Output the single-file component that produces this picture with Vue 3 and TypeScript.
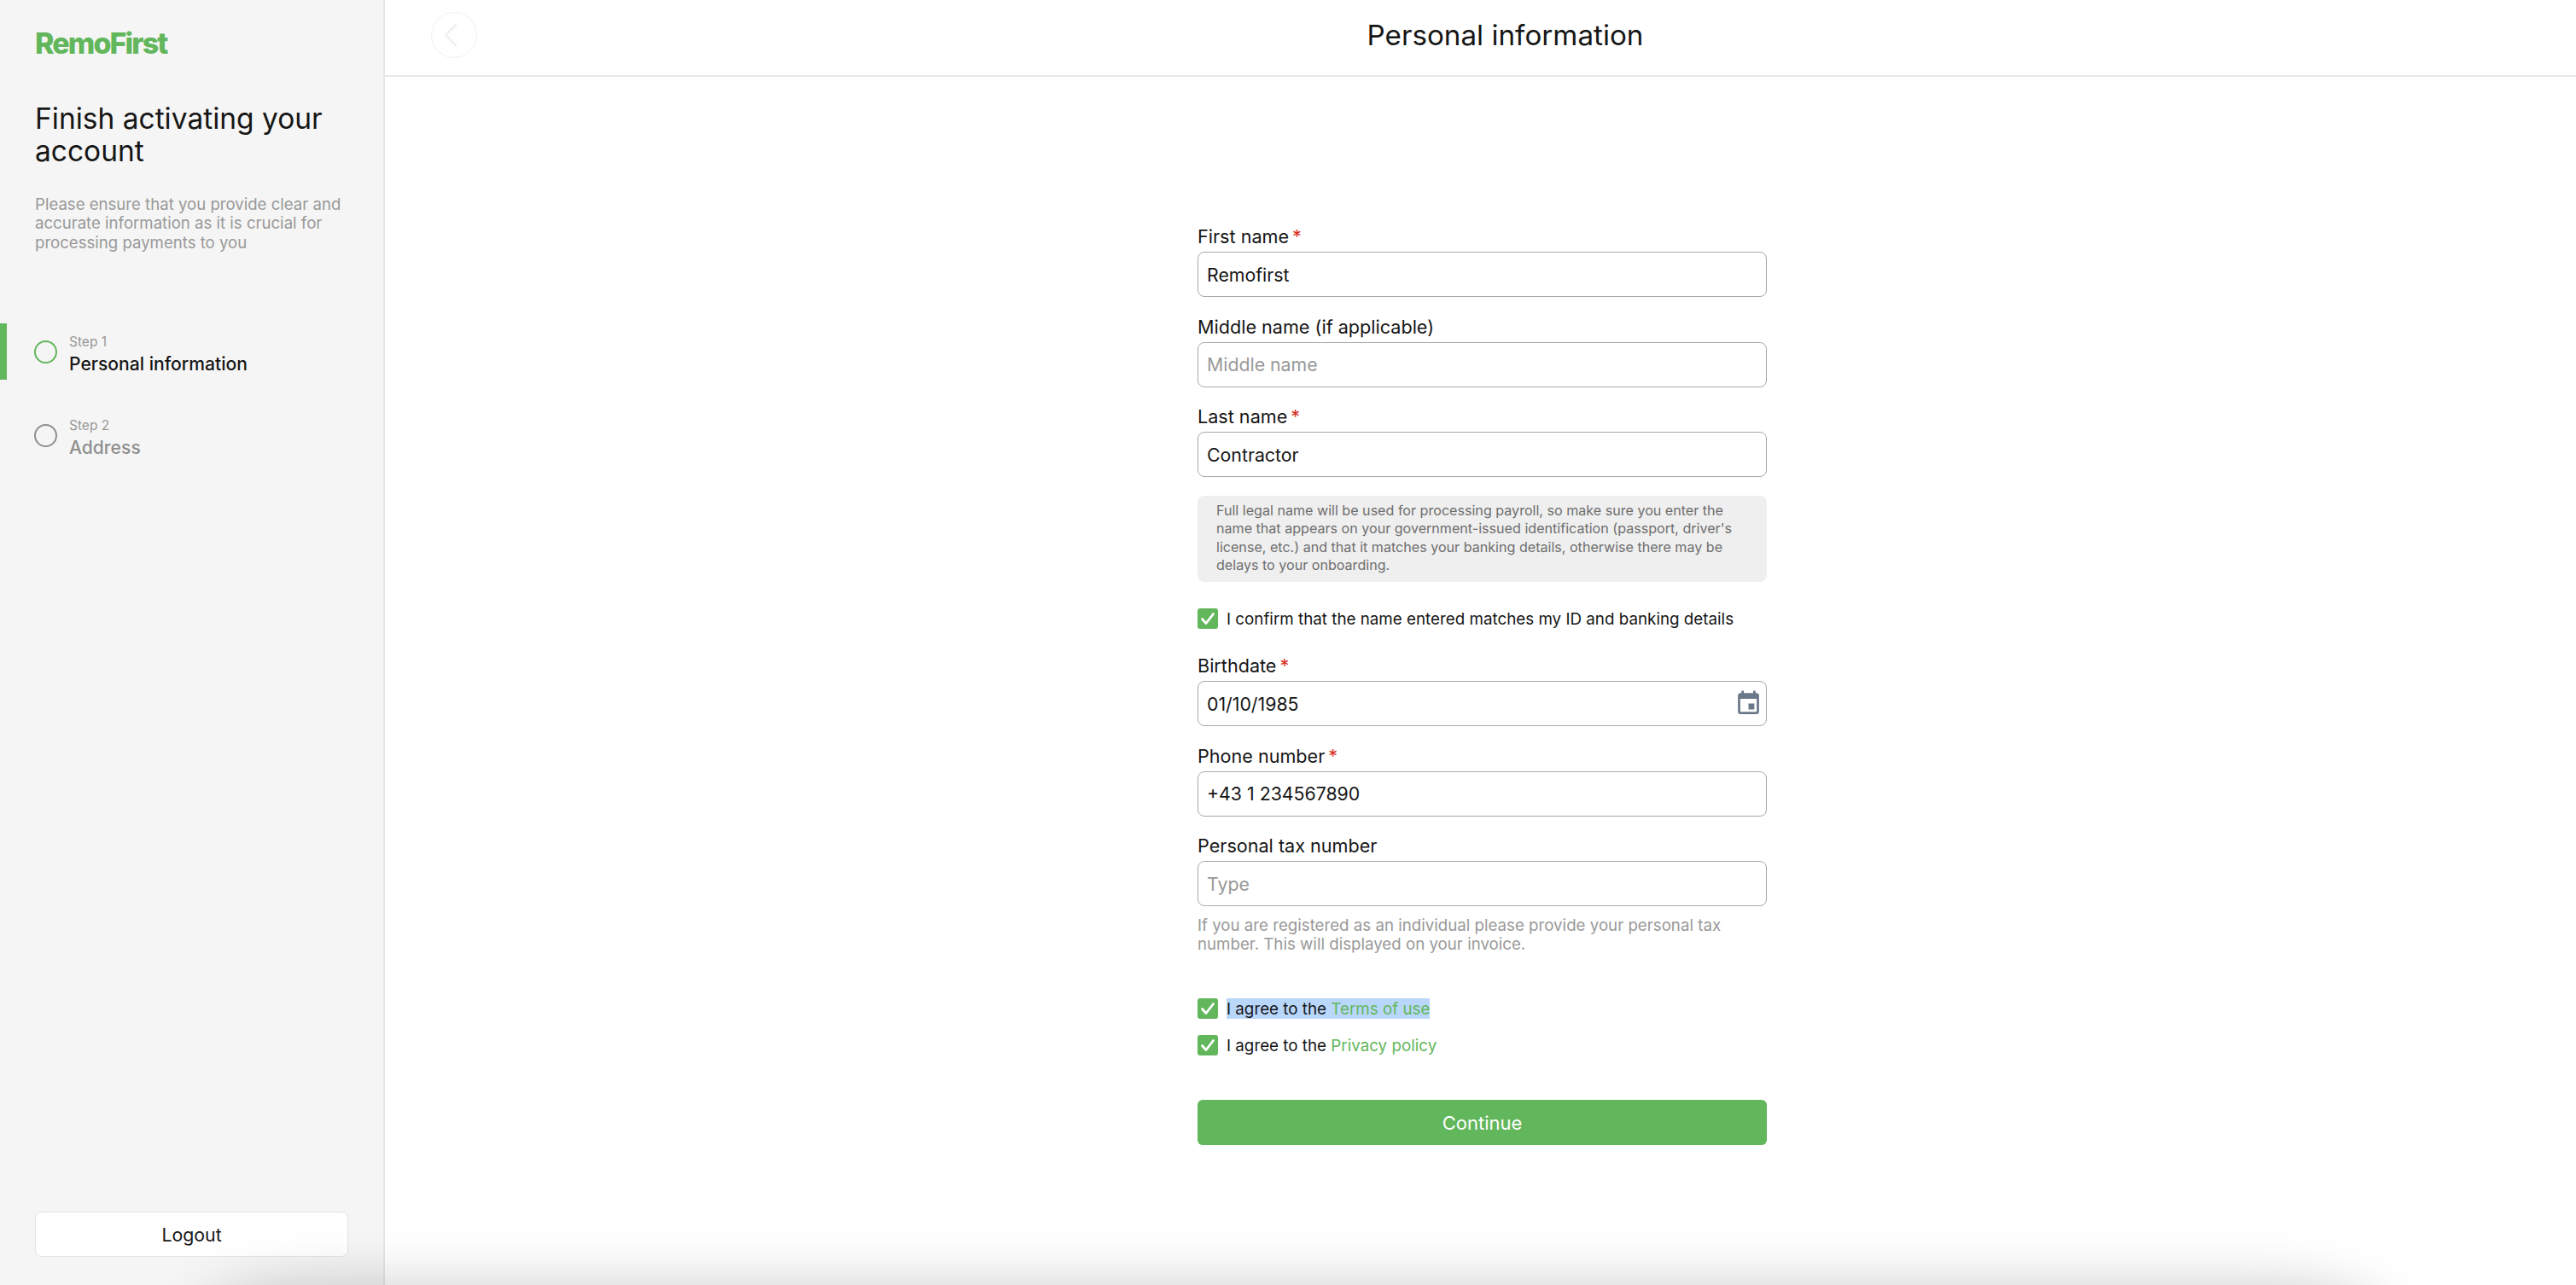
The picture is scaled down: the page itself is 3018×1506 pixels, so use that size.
<script setup lang="ts">
interface Step { small: string; title: string; active: boolean }
const steps: Step[] = [
  { small: 'Step 1', title: 'Personal information', active: true },
  { small: 'Step 2', title: 'Address', active: false },
]
</script>

<template>
  <div class="app">
    <aside class="sidebar">
      <div class="logo">RemoFirst</div>
      <h1 class="headline">Finish activating your account</h1>
      <p class="desc">Please ensure that you provide clear and accurate information as it is crucial for processing payments to you</p>
      <ul class="steps">
        <li v-for="s in steps" :key="s.small" class="step" :class="{ active: s.active }">
          <span class="dot"></span>
          <div class="step-text">
            <div class="step-small">{{ s.small }}</div>
            <div class="step-title">{{ s.title }}</div>
          </div>
        </li>
      </ul>
      <button class="logout" type="button">Logout</button>
    </aside>

    <main class="main">
      <header class="topbar">
        <button class="back" type="button" aria-label="Back">
          <svg width="20" height="30" viewBox="0 0 20 30" fill="none">
            <path d="M15 3 L3 15 L15 27" stroke="#f0f0f0" stroke-width="2.6" stroke-linecap="round" stroke-linejoin="round" />
          </svg>
        </button>
        <div class="title">Personal information</div>
      </header>

      <form class="form" @submit.prevent>
        <div class="names">
          <div class="field">
            <label class="label">First name<span class="req">*</span></label>
            <input class="input" value="Remofirst" />
          </div>
          <div class="field">
            <label class="label">Middle name (if applicable)</label>
            <input class="input" placeholder="Middle name" />
          </div>
          <div class="field">
            <label class="label">Last name<span class="req">*</span></label>
            <input class="input" value="Contractor" />
          </div>
        </div>

        <div class="info">Full legal name will be used for processing payroll, so make sure you enter the name that appears on your government-issued identification (passport, driver's license, etc.) and that it matches your banking details, otherwise there may be delays to your onboarding.</div>

        <div class="check confirm">
          <span class="box">
            <svg width="24" height="24" viewBox="0 0 24 24" fill="none"><path d="M5.5 12.5 L10 17.5 L18.5 6.5" stroke="#fff" stroke-width="2.8" stroke-linecap="round" stroke-linejoin="round" /></svg>
          </span>
          <span class="check-text">I confirm that the name entered matches my ID and banking details</span>
        </div>

        <div class="contact">
          <div class="field">
            <label class="label">Birthdate<span class="req">*</span></label>
            <div class="input-wrap">
              <input class="input" value="01/10/1985" />
              <svg class="cal" width="33" height="33" viewBox="0 0 24 24" fill="#6b7889">
                <path d="M17 12h-5v5h5v-5zM16 1v2H8V1H6v2H5c-1.11 0-1.99.9-1.99 2L3 19c0 1.1.89 2 2 2h14c1.1 0 2-.9 2-2V5c0-1.1-.9-2-2-2h-1V1h-2zm3 18H5V8h14v11z" />
              </svg>
            </div>
          </div>
          <div class="field">
            <label class="label">Phone number<span class="req">*</span></label>
            <input class="input" value="+43 1 234567890" />
          </div>
          <div class="field">
            <label class="label">Personal tax number</label>
            <input class="input" placeholder="Type" />
            <p class="hint">If you are registered as an individual please provide your personal tax number. This will displayed on your invoice.</p>
          </div>
        </div>

        <div class="agreements">
          <div class="check">
            <span class="box">
              <svg width="24" height="24" viewBox="0 0 24 24" fill="none"><path d="M5.5 12.5 L10 17.5 L18.5 6.5" stroke="#fff" stroke-width="2.8" stroke-linecap="round" stroke-linejoin="round" /></svg>
            </span>
            <span class="check-text selected">I agree to the <a class="link">Terms of use</a></span>
          </div>
          <div class="check">
            <span class="box">
              <svg width="24" height="24" viewBox="0 0 24 24" fill="none"><path d="M5.5 12.5 L10 17.5 L18.5 6.5" stroke="#fff" stroke-width="2.8" stroke-linecap="round" stroke-linejoin="round" /></svg>
            </span>
            <span class="check-text">I agree to the <a class="link">Privacy policy</a></span>
          </div>
        </div>

        <button class="continue" type="submit">Continue</button>
      </form>
    </main>

    <div class="bottom-shadow"></div>
  </div>
</template>

<style>
html, body { margin: 0; padding: 0; background: #fff; overflow: hidden; }
</style>

<style scoped>
* { box-sizing: border-box; }
.app {
  position: relative;
  display: flex;
  width: 100%;
  height: 100vh;
  overflow: hidden;
  font-family: Inter, "Liberation Sans", sans-serif;
  color: #161616;
}
.sidebar {
  width: 451px;
  flex: none;
  display: flex;
  flex-direction: column;
  background: #f5f5f5;
  border-right: 2px solid #e6e6e6;
  padding-top: 33px;
}
.logo {
  margin-left: 41px;
  height: 36px;
  line-height: 36px;
  font-size: 34px;
  font-weight: 800;
  letter-spacing: -1.9px;
  color: #62b65b;
}
.headline {
  margin: 52px 30px 0 41px;
  font-size: 33.5px;
  line-height: 37.5px;
  font-weight: 400;
  color: #161616;
}
.desc {
  margin: 31.5px 30px 0 41px;
  font-size: 18.6px;
  line-height: 22.5px;
  color: #999;
}
.steps {
  list-style: none;
  margin: 84px 0 0;
  padding: 0;
  display: flex;
  flex-direction: column;
  gap: 32.5px;
}
.step {
  height: 66px;
  display: flex;
  align-items: center;
  gap: 14px;
  padding-left: 32px;
  border-left: 8px solid transparent;
  color: #8f8f8f;
}
.step.active { border-left-color: #62b65b; color: #161616; }
.dot {
  width: 27px;
  height: 27px;
  flex: none;
  border-radius: 50%;
  border: 2px solid #8f8f8f;
}
.step.active .dot { border-color: #62b65b; }
.step-text { padding-top: 8px; }
.step-small { font-size: 15.5px; line-height: 20px; color: #999; }
.step-title { font-size: 21.1px; line-height: 31px; font-weight: 500; }
.logout {
  margin: auto 0 33px 41px;
  width: 367px;
  height: 53px;
  background: #fff;
  border: 1.5px solid #e4e4e4;
  border-radius: 8px;
  font: 400 21.3px Inter, "Liberation Sans", sans-serif;
  color: #161616;
}
.main {
  flex: 1;
  min-width: 0;
  display: flex;
  flex-direction: column;
  background: #fff;
}
.topbar {
  height: 90px;
  flex: none;
  display: flex;
  align-items: center;
  padding: 0 54px 6px 54px;
  border-bottom: 2px solid #e8e8e8;
}
.back {
  width: 54px;
  height: 54px;
  flex: none;
  display: flex;
  align-items: center;
  justify-content: center;
  padding: 0 6px 0 0;
  background: #fff;
  border: 1.5px solid #f1f1f1;
  border-radius: 50%;
}
.title {
  flex: 1;
  text-align: center;
  font-size: 33.2px;
  line-height: 42px;
  font-weight: 400;
  margin-left: 4px;
  color: #161616;
}
.form {
  width: 667px;
  margin: 173px 0 0 952px;
  display: flex;
  flex-direction: column;
}
.names, .contact { display: flex; flex-direction: column; gap: 20.5px; }
.contact { margin-top: 29px; }
.label {
  display: block;
  height: 32px;
  line-height: 28px;
  font-size: 21.6px;
  font-weight: 400;
  color: #161616;
}
.req { color: #d93025; margin-left: 4px; }
.input {
  display: block;
  width: 100%;
  height: 53px;
  padding: 0 10px;
  background: #fff;
  border: 1.5px solid #a8a8a8;
  border-radius: 8px;
  outline: none;
  font: 400 21.3px Inter, "Liberation Sans", sans-serif;
  color: #161616;
}
.input::placeholder { color: #999; opacity: 1; }
.input-wrap { position: relative; }
.cal { position: absolute; right: 5px; top: 10px; }
.info {
  margin-top: 22px;
  height: 101px;
  padding: 7px 22px 0;
  background: #efefef;
  border-radius: 8px;
  font-size: 16.1px;
  line-height: 21.3px;
  color: #6e6e6e;
}
.check {
  display: flex;
  align-items: center;
  gap: 10px;
  height: 24px;
  font-size: 18.8px;
  font-weight: 400;
  color: #161616;
}
.check-text { line-height: 26px; height: 24px; }
.confirm { margin-top: 31px; }
.box {
  width: 24px;
  height: 24px;
  flex: none;
  background: #62b65b;
  border-radius: 3px;
  display: block;
}
.box svg { display: block; }
.selected { background: #b9d6fb; }
.link { color: #62b65b; }
.hint {
  margin: 11.5px 0 0;
  font-size: 18.7px;
  line-height: 22.3px;
  color: #999;
}
.agreements { margin-top: 52px; display: flex; flex-direction: column; gap: 19px; }
.continue {
  margin-top: 52px;
  height: 53px;
  background: #62b65b;
  border: none;
  border-radius: 6px;
  color: #fff;
  font: 400 22px Inter, "Liberation Sans", sans-serif;
}
.bottom-shadow {
  position: absolute;
  left: 226px;
  width: 2574px;
  bottom: -300px;
  height: 300px;
  border-radius: 150px 150px 0 0 / 60px 60px 0 0;
  box-shadow: 0 0 66px rgba(0, 0, 0, 0.2);
  pointer-events: none;
}
</style>
